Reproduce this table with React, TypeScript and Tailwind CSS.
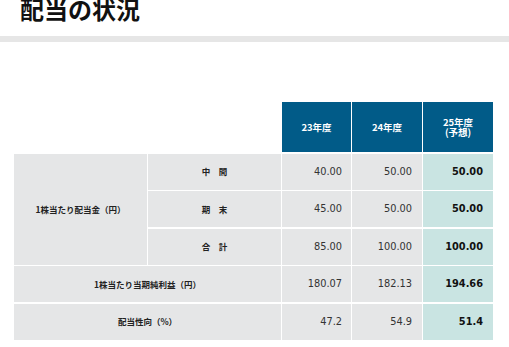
const JP = { fontFamily: '"Noto Sans CJK JP", "Noto Sans", sans-serif' }

type Row = {
  values: [string, string, string]
}

const DIVIDEND_ROWS: { label: string; values: [string, string, string] }[] = [
  { label: '中　間', values: ['40.00', '50.00', '50.00'] },
  { label: '期　末', values: ['45.00', '50.00', '50.00'] },
  { label: '合　計', values: ['85.00', '100.00', '100.00'] },
]

const OTHER_ROWS: { label: string; values: [string, string, string] }[] = [
  { label: '1株当たり当期純利益（円）', values: ['180.07', '182.13', '194.66'] },
  { label: '配当性向（%）', values: ['47.2', '54.9', '51.4'] },
]

function ValueCells({ values }: Row) {
  return (
    <>
      <div className="bg-[#e5e6e7] flex items-center justify-end pr-[9px] pt-px text-[9.8px] text-[#333]">{values[0]}</div>
      <div className="bg-[#e5e6e7] flex items-center justify-end pr-[10px] pt-px text-[9.8px] text-[#333]">{values[1]}</div>
      <div className="bg-[#c9e4e2] flex items-center justify-end pr-[10px] pt-px text-[9.8px] font-bold text-[#111]">{values[2]}</div>
    </>
  )
}

export default function App() {
  return (
    <div className="w-[509px] h-[347px] bg-white overflow-hidden" style={{ fontFamily: '"DejaVu Sans", sans-serif' }}>
      <h1 className="-mt-[3px] pl-[20px] text-[24px] leading-[24px] font-bold text-[#111]" style={JP}>
        配当の状況
      </h1>
      <div className="mt-[15px] h-[6px] bg-[#e6e6e6]" />

      <div
        className="mt-[60px] ml-[14px] grid grid-cols-[133px_133px_69px_70px_70px] grid-rows-[50px_repeat(5,36px)] gap-x-px gap-y-[1.5px]"
      >
        <div />
        <div />
        {['23年度', '24年度', '25年度\n(予想)'].map((h) => (
          <div
            key={h}
            className="bg-[#015b88] text-white font-bold text-[9.5px] leading-[10px] flex items-center justify-center text-center whitespace-pre-line"
            style={JP}
          >
            {h}
          </div>
        ))}

        <div
          className="row-span-3 bg-[#e5e6e7] flex items-center justify-center font-bold text-[8.5px] text-[#222]"
          style={JP}
        >
          1株当たり配当金（円）
        </div>
        {DIVIDEND_ROWS.map((r, i) => (
          <div key={r.label} className="contents">
            <div
              className={`bg-[#e5e6e7] flex items-center justify-center font-bold text-[8.5px] text-[#222] ${i === 0 ? '' : 'col-start-2'}`}
              style={JP}
            >
              {r.label}
            </div>
            <ValueCells values={r.values} />
          </div>
        ))}

        {OTHER_ROWS.map((r) => (
          <div key={r.label} className="contents">
            <div
              className="col-span-2 bg-[#e5e6e7] flex items-center justify-center font-bold text-[8.5px] text-[#222]"
              style={JP}
            >
              {r.label}
            </div>
            <ValueCells values={r.values} />
          </div>
        ))}
      </div>
    </div>
  )
}
